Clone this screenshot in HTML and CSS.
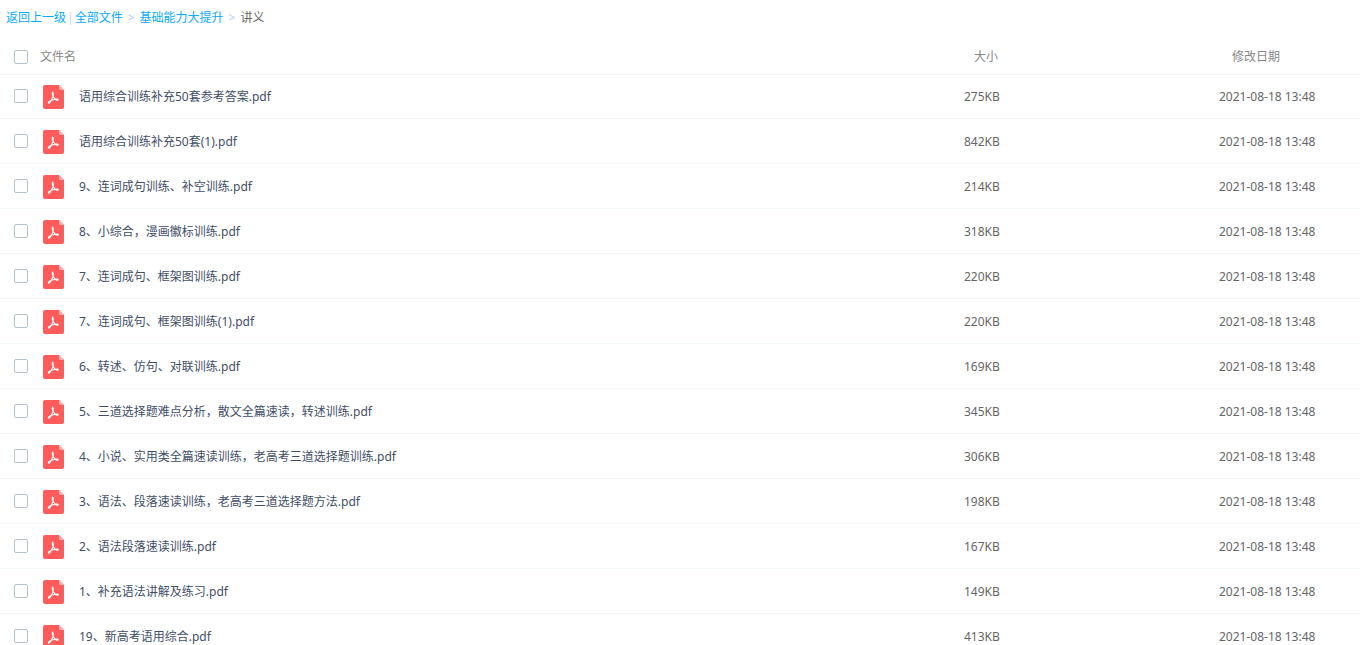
FILE: index.html
```html
<!DOCTYPE html>
<html lang="zh-CN">
<head>
    <meta charset="UTF-8">
    <meta name="viewport" content="width=device-width, initial-scale=1.0">
    <title>讲义 - 全部文件</title>
    <link rel="stylesheet" href="styles.css">
</head>
<body>

<!-- PDF 图标 -->
<svg class="icon-defs" aria-hidden="true">
    <symbol id="icon-pdf" viewBox="0 0 21 24">
        <path fill="#ff5b5b" d="M2 0h14l5 5v17a2 2 0 0 1-2 2H2a2 2 0 0 1-2-2V2a2 2 0 0 1 2-2z"/>
        <path fill="#ffadad" d="M16 0l5 5h-4a1 1 0 0 1-1-1z"/>
        <path fill="none" stroke="#fff" stroke-width="1.1" stroke-linecap="round" stroke-linejoin="round" d="M9.500 7c1.100.3.800 2.200.600 4.500L8.300 15.300C7.300 17.200 6.200 18.600 5.400 18c-.5-.8 1-2 2.900-2.700l4-1c1.500-.4 3.300-.2 3 .6-.3.800-1.900.300-3-.600l-2.200-2.800C9.300 10 8.900 8 9.500 7z"/>
    </symbol>
</svg>

<nav class="breadcrumb">
    <a href="#">返回上一级</a>
    <span class="divider">|</span>
    <a href="#">全部文件</a>
    <span class="arrow">&gt;</span>
    <a href="#">基础能力大提升</a>
    <span class="arrow">&gt;</span>
    <span>讲义</span>
</nav>

<table class="file-table">
    <colgroup>
        <col>
        <col class="col-size">
        <col class="col-date">
    </colgroup>
    <thead>
        <tr>
            <th><div class="head-name"><input type="checkbox" id="all"><label for="all">文件名</label></div></th>
            <th class="head-size">大小</th>
            <th class="head-date">修改日期</th>
        </tr>
    </thead>
    <tbody>
        <tr>
            <td><div class="file-name"><input type="checkbox" id="f1"><svg class="icon"><use href="#icon-pdf"/></svg><label for="f1">语用综合训练补充50套参考答案.pdf</label></div></td>
            <td>275KB</td>
            <td>2021-08-18 13:48</td>
        </tr>
        <tr>
            <td><div class="file-name"><input type="checkbox" id="f2"><svg class="icon"><use href="#icon-pdf"/></svg><label for="f2">语用综合训练补充50套(1).pdf</label></div></td>
            <td>842KB</td>
            <td>2021-08-18 13:48</td>
        </tr>
        <tr>
            <td><div class="file-name"><input type="checkbox" id="f3"><svg class="icon"><use href="#icon-pdf"/></svg><label for="f3">9、连词成句训练、补空训练.pdf</label></div></td>
            <td>214KB</td>
            <td>2021-08-18 13:48</td>
        </tr>
        <tr>
            <td><div class="file-name"><input type="checkbox" id="f4"><svg class="icon"><use href="#icon-pdf"/></svg><label for="f4">8、小综合，漫画徽标训练.pdf</label></div></td>
            <td>318KB</td>
            <td>2021-08-18 13:48</td>
        </tr>
        <tr>
            <td><div class="file-name"><input type="checkbox" id="f5"><svg class="icon"><use href="#icon-pdf"/></svg><label for="f5">7、连词成句、框架图训练.pdf</label></div></td>
            <td>220KB</td>
            <td>2021-08-18 13:48</td>
        </tr>
        <tr>
            <td><div class="file-name"><input type="checkbox" id="f6"><svg class="icon"><use href="#icon-pdf"/></svg><label for="f6">7、连词成句、框架图训练(1).pdf</label></div></td>
            <td>220KB</td>
            <td>2021-08-18 13:48</td>
        </tr>
        <tr>
            <td><div class="file-name"><input type="checkbox" id="f7"><svg class="icon"><use href="#icon-pdf"/></svg><label for="f7">6、转述、仿句、对联训练.pdf</label></div></td>
            <td>169KB</td>
            <td>2021-08-18 13:48</td>
        </tr>
        <tr>
            <td><div class="file-name"><input type="checkbox" id="f8"><svg class="icon"><use href="#icon-pdf"/></svg><label for="f8">5、三道选择题难点分析，散文全篇速读，转述训练.pdf</label></div></td>
            <td>345KB</td>
            <td>2021-08-18 13:48</td>
        </tr>
        <tr>
            <td><div class="file-name"><input type="checkbox" id="f9"><svg class="icon"><use href="#icon-pdf"/></svg><label for="f9">4、小说、实用类全篇速读训练，老高考三道选择题训练.pdf</label></div></td>
            <td>306KB</td>
            <td>2021-08-18 13:48</td>
        </tr>
        <tr>
            <td><div class="file-name"><input type="checkbox" id="f10"><svg class="icon"><use href="#icon-pdf"/></svg><label for="f10">3、语法、段落速读训练，老高考三道选择题方法.pdf</label></div></td>
            <td>198KB</td>
            <td>2021-08-18 13:48</td>
        </tr>
        <tr>
            <td><div class="file-name"><input type="checkbox" id="f11"><svg class="icon"><use href="#icon-pdf"/></svg><label for="f11">2、语法段落速读训练.pdf</label></div></td>
            <td>167KB</td>
            <td>2021-08-18 13:48</td>
        </tr>
        <tr>
            <td><div class="file-name"><input type="checkbox" id="f12"><svg class="icon"><use href="#icon-pdf"/></svg><label for="f12">1、补充语法讲解及练习.pdf</label></div></td>
            <td>149KB</td>
            <td>2021-08-18 13:48</td>
        </tr>
        <tr>
            <td><div class="file-name"><input type="checkbox" id="f13"><svg class="icon"><use href="#icon-pdf"/></svg><label for="f13">19、新高考语用综合.pdf</label></div></td>
            <td>413KB</td>
            <td>2021-08-18 13:48</td>
        </tr>
    </tbody>
</table>

</body>
</html>
```

FILE: styles.css
```css
body {
    margin: 0;
    font-family: "Noto Sans", "Noto Sans CJK SC", sans-serif;
    font-size: 12px;
    line-height: 18px;
    color: #666;
    background-color: #fff;
}
/* 页面超出窗口时不显示滚动条 */
html {
    scrollbar-width: none;
}
.icon-defs {
    display: none;
}
.breadcrumb {
    display: flex;
    align-items: center;
    height: 36px;
    padding-left: 6px;
}
.breadcrumb a {
    color: #09aaff;
    text-decoration: none;
}
.breadcrumb a:hover {
    text-decoration: underline;
}
.divider {
    margin: 0 1px;
    color: #c4d8f4;
}
.arrow {
    margin: 0 5px;
    color: #b4ccf0;
}
.file-table {
    width: 100%;
    table-layout: fixed;
    border-collapse: separate;
    border-spacing: 0;
}
.col-size {
    width: 255px;
}
.col-date {
    width: 141px;
}
.file-table th {
    box-sizing: border-box;
    height: 38px;
    padding: 3px 0 0;
    font-weight: normal;
    text-align: left;
    color: #888;
}
.file-table .head-size {
    padding-left: 10px;
}
.file-table .head-date {
    padding-left: 13px;
}
.file-table td {
    box-sizing: border-box;
    height: 45px;
    padding: 1px 0 0;
    border-bottom: 1px solid #f2f6fd;
}
.file-table tbody tr:first-child td {
    padding-top: 0;
    border-top: 1px solid #f2f6fd;
}
.file-table tbody tr:hover {
    background-color: #f4fbff;
}
.head-name, .file-name {
    display: flex;
    align-items: center;
    padding-left: 14px;
}
.head-name label {
    margin-left: 12px;
}
.file-name label {
    margin-left: 15px;
    color: #424e67;
}
.icon {
    width: 21px;
    height: 24px;
    margin-left: 15px;
}
input[type="checkbox"] {
    appearance: none;
    box-sizing: border-box;
    width: 14px;
    height: 14px;
    margin: 0;
    border: 1px solid #b4c2d3;
    border-radius: 2px;
    background-color: #fff;
}
.file-name input[type="checkbox"] {
    margin-bottom: 2px;
}
input[type="checkbox"]:checked {
    border-color: #09aaff;
    background-color: #09aaff;
}
```
